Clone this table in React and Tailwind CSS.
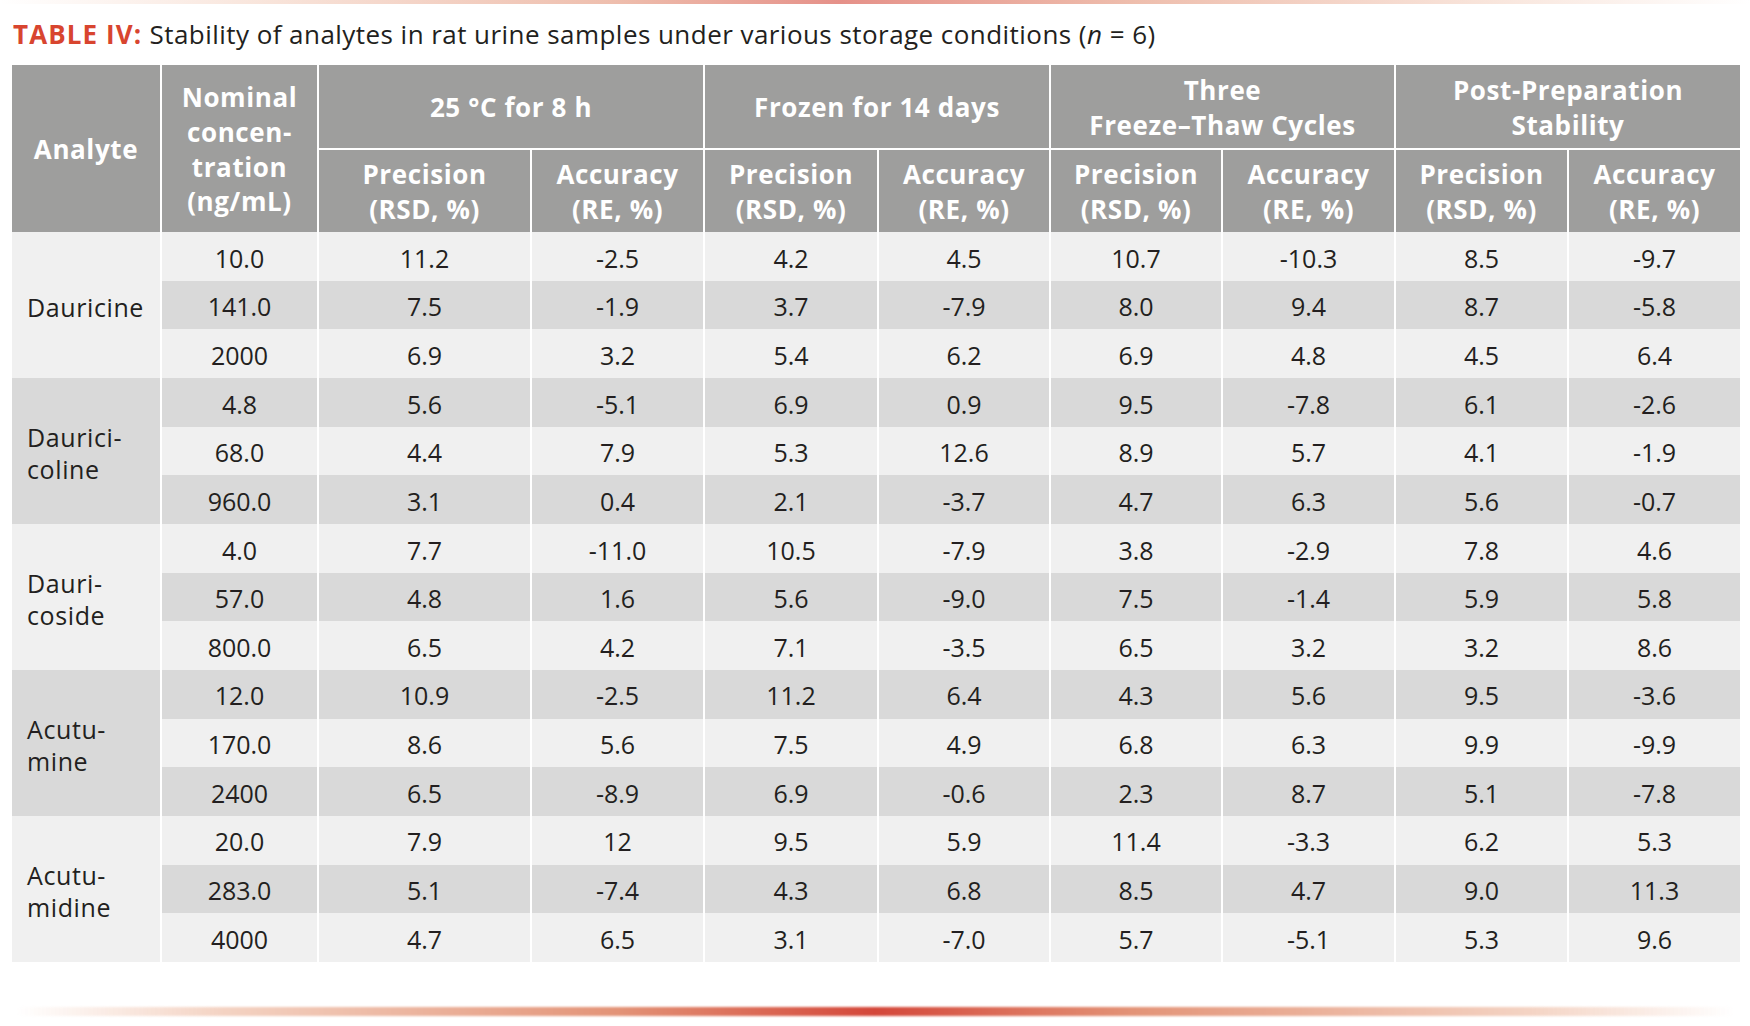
import React from "react";

const groups = [
  {
    name: ["Dauricine"],
    rows: [
      ["10.0", "11.2", "-2.5", "4.2", "4.5", "10.7", "-10.3", "8.5", "-9.7"],
      ["141.0", "7.5", "-1.9", "3.7", "-7.9", "8.0", "9.4", "8.7", "-5.8"],
      ["2000", "6.9", "3.2", "5.4", "6.2", "6.9", "4.8", "4.5", "6.4"],
    ],
  },
  {
    name: ["Daurici-", "coline"],
    rows: [
      ["4.8", "5.6", "-5.1", "6.9", "0.9", "9.5", "-7.8", "6.1", "-2.6"],
      ["68.0", "4.4", "7.9", "5.3", "12.6", "8.9", "5.7", "4.1", "-1.9"],
      ["960.0", "3.1", "0.4", "2.1", "-3.7", "4.7", "6.3", "5.6", "-0.7"],
    ],
  },
  {
    name: ["Dauri-", "coside"],
    rows: [
      ["4.0", "7.7", "-11.0", "10.5", "-7.9", "3.8", "-2.9", "7.8", "4.6"],
      ["57.0", "4.8", "1.6", "5.6", "-9.0", "7.5", "-1.4", "5.9", "5.8"],
      ["800.0", "6.5", "4.2", "7.1", "-3.5", "6.5", "3.2", "3.2", "8.6"],
    ],
  },
  {
    name: ["Acutu-", "mine"],
    rows: [
      ["12.0", "10.9", "-2.5", "11.2", "6.4", "4.3", "5.6", "9.5", "-3.6"],
      ["170.0", "8.6", "5.6", "7.5", "4.9", "6.8", "6.3", "9.9", "-9.9"],
      ["2400", "6.5", "-8.9", "6.9", "-0.6", "2.3", "8.7", "5.1", "-7.8"],
    ],
  },
  {
    name: ["Acutu-", "midine"],
    rows: [
      ["20.0", "7.9", "12", "9.5", "5.9", "11.4", "-3.3", "6.2", "5.3"],
      ["283.0", "5.1", "-7.4", "4.3", "6.8", "8.5", "4.7", "9.0", "11.3"],
      ["4000", "4.7", "6.5", "3.1", "-7.0", "5.7", "-5.1", "5.3", "9.6"],
    ],
  },
];

const cols =
  "grid-cols-[148px_155px_211px_171px_172px_170px_170px_171px_171px_171px]";

const hdr =
  "bg-[#9e9e9d] text-white font-bold text-[26px] tracking-[0.6px] leading-[34.6px] flex items-center justify-center text-center pt-[2px]";

function Sub({ a, b }) {
  return (
    <div className={hdr}>
      <div>
        {a}
        <br />
        {b}
      </div>
    </div>
  );
}

export default function App() {
  const bodyCells = [];
  let r = 0;
  groups.forEach((g, gi) => {
    g.rows.forEach((row, ri) => {
      const rowBg = r % 2 === 0 ? "bg-[#f0f0f0]" : "bg-[#d9d9d9]";
      if (ri === 0) {
        bodyCells.push(
          <div
            key={`a${gi}`}
            className={`row-span-3 flex items-center pl-[15px] pt-[4px] text-[25px] tracking-[0.6px] leading-[32px] ${
              gi % 2 === 0 ? "bg-[#f0f0f0]" : "bg-[#d9d9d9]"
            }`}
          >
            <div>
              {g.name.map((n, i) => (
                <div key={i}>{n}</div>
              ))}
            </div>
          </div>
        );
      }
      row.forEach((v, ci) => {
        bodyCells.push(
          <div
            key={`c${r}-${ci}`}
            className={`${rowBg} flex items-center justify-center text-[25px] pt-[4px]`}
          >
            {v}
          </div>
        );
      });
      r++;
    });
  });

  return (
    <div className="w-[1750px] h-[1026px] bg-white text-[#231f20] font-['Open_Sans',sans-serif] overflow-hidden">
      <div className="h-[4px] opacity-60 bg-[linear-gradient(90deg,rgba(255,255,255,0)_0%,#f4d3c3_15%,#e39377_35%,#d4473a_48%,#e39377_65%,#f4d3c3_85%,rgba(255,255,255,0)_100%)]" />
      <div className="pl-[13px] pt-[15px] h-[61px] text-[26px] tracking-[0.45px] leading-[30px] whitespace-nowrap">
        <span className="font-bold text-[#d8452f] tracking-[1.1px]">TABLE IV:</span>{" "}
        <span>
          Stability of analytes in rat urine samples under various storage
          conditions (<i>n</i> = 6)
        </span>
      </div>
      <div className="ml-[12px] w-[1728px] bg-white">
        <div className={`grid ${cols} grid-rows-[83px_82px] gap-[2px]`}>
          <div className={`${hdr} row-span-2`}>Analyte</div>
          <div className={`${hdr} row-span-2`}>
            <div>
              Nominal
              <br />
              concen-
              <br />
              tration
              <br />
              (ng/mL)
            </div>
          </div>
          <div className={`${hdr} col-span-2`}>25 °C for 8 h</div>
          <div className={`${hdr} col-span-2`}>Frozen for 14 days</div>
          <div className={`${hdr} col-span-2`}>
            <div>
              Three
              <br />
              Freeze–Thaw Cycles
            </div>
          </div>
          <div className={`${hdr} col-span-2`}>
            <div>
              Post-Preparation
              <br />
              Stability
            </div>
          </div>
          <Sub a="Precision" b="(RSD, %)" />
          <Sub a="Accuracy" b="(RE, %)" />
          <Sub a="Precision" b="(RSD, %)" />
          <Sub a="Accuracy" b="(RE, %)" />
          <Sub a="Precision" b="(RSD, %)" />
          <Sub a="Accuracy" b="(RE, %)" />
          <Sub a="Precision" b="(RSD, %)" />
          <Sub a="Accuracy" b="(RE, %)" />
        </div>
        <div className={`grid ${cols} auto-rows-[48.67px] gap-x-[2px]`}>
          {bodyCells}
        </div>
      </div>
      <div className="mt-[45px] mx-[17px] h-[9px] rounded-full blur-[1px] bg-[linear-gradient(90deg,rgba(255,255,255,0)_0%,#f4d3c3_12%,#e39377_35%,#d4473a_50%,#e39377_65%,#f4d3c3_88%,rgba(255,255,255,0)_100%)]" />
    </div>
  );
}
